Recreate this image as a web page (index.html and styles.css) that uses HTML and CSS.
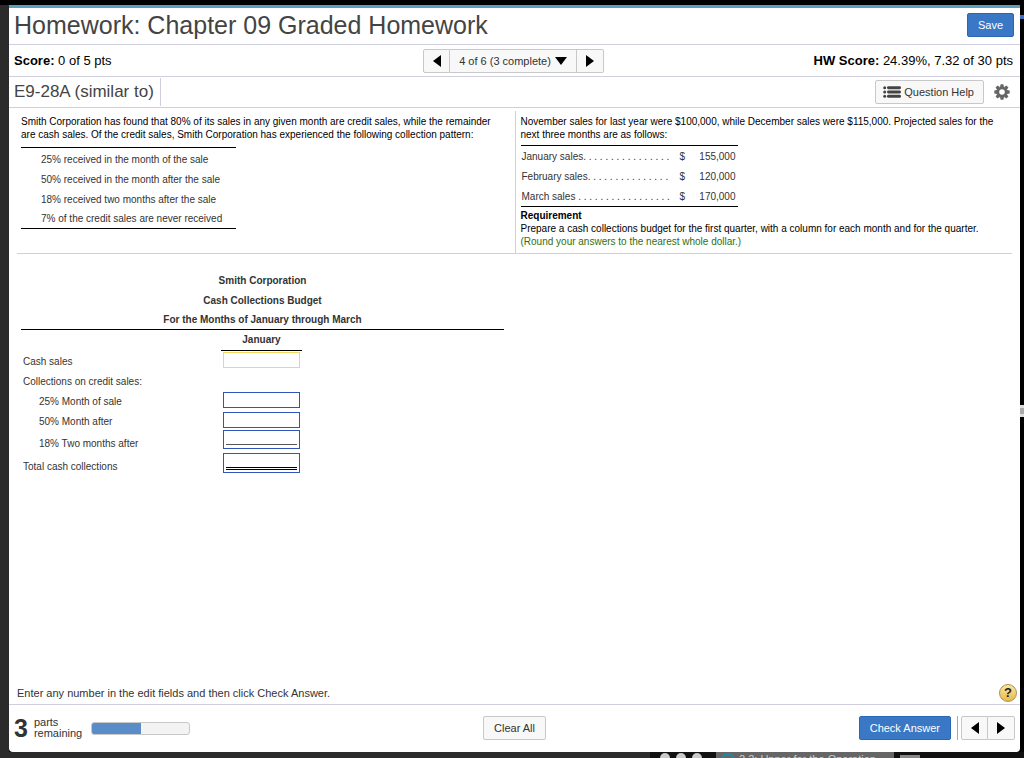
FILE: index.html
```
<!DOCTYPE html>
<html lang="en">
<head>
    <meta charset="UTF-8">
    <meta name="viewport" content="width=device-width, initial-scale=1.0">
    <title>Homework: Chapter 09 Graded Homework</title>
    <link rel="stylesheet" href="styles.css">
</head>
<body>
    <div class="window">
        <header class="titlebar">
            <h1>Homework: Chapter 09 Graded Homework</h1>
            <button class="btn btn-primary" type="button">Save</button>
        </header>

        <div class="scorebar">
            <div><b>Score:</b> 0 of 5 pts</div>
            <nav class="btn-group">
                <button class="btn btn-arrow" type="button" aria-label="Previous question">
                    <svg width="8" height="12" viewBox="0 0 8 12"><path d="M8 0v12L0 6z"/></svg>
                </button>
                <button class="btn btn-pick" type="button">4 of 6 (3 complete)
                    <svg width="12" height="8" viewBox="0 0 12 8"><path d="M0 0h12L6 8z"/></svg>
                </button>
                <button class="btn btn-arrow" type="button" aria-label="Next question">
                    <svg width="8" height="12" viewBox="0 0 8 12"><path d="M0 0v12l8-6z"/></svg>
                </button>
            </nav>
            <div class="hw-score"><b>HW Score:</b> 24.39%, 7.32 of 30 pts</div>
        </div>

        <div class="questionbar">
            <h2>E9-28A (similar to)</h2>
            <div class="tools">
                <button class="btn btn-help" type="button">
                    <svg width="18" height="12" viewBox="0 0 18 12">
                        <g fill="#444">
                            <circle cx="1.7" cy="1.7" r="1.5"/><circle cx="1.7" cy="6" r="1.5"/><circle cx="1.7" cy="10.3" r="1.5"/>
                            <rect x="4" y="0.2" width="14" height="3" rx="1.4"/><rect x="4" y="4.5" width="14" height="3" rx="1.4"/><rect x="4" y="8.8" width="14" height="3" rx="1.4"/>
                        </g>
                    </svg>
                    Question Help
                </button>
                <button class="gear" type="button" aria-label="Settings">
                    <svg width="16" height="16" viewBox="-8 -8 16 16">
                        <circle r="4.2" fill="none" stroke="#666" stroke-width="2.8"/>
                        <g fill="#666">
                            <path id="tooth" d="M-1.9-5L-1.4-7.7H1.4L1.9-5z"/>
                            <use href="#tooth" transform="rotate(45)"/>
                            <use href="#tooth" transform="rotate(90)"/>
                            <use href="#tooth" transform="rotate(135)"/>
                            <use href="#tooth" transform="rotate(180)"/>
                            <use href="#tooth" transform="rotate(225)"/>
                            <use href="#tooth" transform="rotate(270)"/>
                            <use href="#tooth" transform="rotate(315)"/>
                        </g>
                    </svg>
                </button>
            </div>
        </div>

        <main>
            <section class="problem">
                <div class="problem-left">
                    <p>Smith Corporation has found that 80% of its sales in any given month are credit sales, while the remainder<br>are cash sales. Of the credit sales, Smith Corporation has experienced the following collection pattern:</p>
                    <ul class="pattern">
                        <li>25% received in the month of the sale</li>
                        <li>50% received in the month after the sale</li>
                        <li>18% received two months after the sale</li>
                        <li>7% of the credit sales are never received</li>
                    </ul>
                </div>
                <div class="problem-right">
                    <p>November sales for last year were $100,000, while December sales were $115,000. Projected sales for the<br>next three months are as follows:</p>
                    <table class="sales">
                        <tr><td>January sales. . . . . . . . . . . . . . . .</td><td>$</td><td>155,000</td></tr>
                        <tr><td>February sales. . . . . . . . . . . . . . .</td><td>$</td><td>120,000</td></tr>
                        <tr><td>March sales . . . . . . . . . . . . . . . . .</td><td>$</td><td>170,000</td></tr>
                    </table>
                    <h3>Requirement</h3>
                    <p>Prepare a cash collections budget for the first quarter, with a column for each month and for the quarter.</p>
                    <p class="round">(Round your answers to the nearest whole dollar.)</p>
                </div>
            </section>

            <section class="answer">
                <div class="caption">
                    <div>Smith Corporation</div>
                    <div>Cash Collections Budget</div>
                    <div>For the Months of January through March</div>
                </div>
                <table class="budget">
                    <thead>
                        <tr><th></th><th class="month">January</th></tr>
                    </thead>
                    <tbody>
                        <tr><td><label for="cash">Cash sales</label></td><td><input class="active" id="cash" type="text"></td></tr>
                        <tr><td>Collections on credit sales:</td><td></td></tr>
                        <tr><td class="indent"><label for="m0">25% Month of sale</label></td><td><input id="m0" type="text"></td></tr>
                        <tr><td class="indent"><label for="m1">50% Month after</label></td><td><input id="m1" type="text"></td></tr>
                        <tr class="tall"><td class="indent"><label for="m2">18% Two months after</label></td><td><div class="field subtotal"><input id="m2" type="text"></div></td></tr>
                        <tr class="tall"><td><label for="total">Total cash collections</label></td><td><div class="field total"><input id="total" type="text"></div></td></tr>
                    </tbody>
                </table>
            </section>
        </main>

        <div class="hint">
            <span>Enter any number in the edit fields and then click Check Answer.</span>
            <button class="help" type="button" aria-label="Help">?</button>
        </div>

        <footer>
            <div class="parts">
                <span class="count">3</span>
                <span class="parts-label">parts<br>remaining</span>
                <div class="progress"><div class="bar" style="width: 50%"></div></div>
            </div>
            <button class="btn btn-clear" type="button">Clear All</button>
            <div class="actions">
                <button class="btn btn-primary" type="button">Check Answer</button>
                <div class="btn-group">
                    <button class="btn btn-arrow" type="button" aria-label="Previous part">
                        <svg width="8" height="12" viewBox="0 0 8 12"><path d="M8 0v12L0 6z"/></svg>
                    </button>
                    <button class="btn btn-arrow" type="button" aria-label="Next part">
                        <svg width="8" height="12" viewBox="0 0 8 12"><path d="M0 0v12l8-6z"/></svg>
                    </button>
                </div>
            </div>
        </footer>
    </div>

    <!-- top edge of the browser window behind -->
    <div class="behind">
        <div class="browser">
            <i class="dot"></i><i class="dot"></i><i class="dot"></i>
            <div class="tab"><i class="favicon"></i>2.2: Upper for the Operation</div>
            <i class="newtab"></i>
        </div>
    </div>
    <div class="edge-blue"></div>
    <div class="edge-scroll"></div>
</body>
</html>
```
FILE: styles.css
```
* {
    box-sizing: border-box;
}
body {
    display: flex;
    flex-direction: column;
    min-height: 100vh;
    margin: 0;
    padding: 5px 4px 0 9px;
    background: linear-gradient(to right, #2b2b2b 9px, #000 9px);
    font-family: "Liberation Sans", Arial, sans-serif;
    font-size: 11px;
    color: #333;
    position: relative;
}
body::before {
    content: "";
    position: absolute;
    top: 0;
    left: 0;
    right: 0;
    height: 5px;
    background: #000;
}
h1, h2, h3, p, ul {
    margin: 0;
    padding: 0;
    font-weight: normal;
}
button, input {
    font-family: inherit;
}
.window {
    flex: 1;
    display: flex;
    flex-direction: column;
    background: #fff;
    border-top: 3px solid #5a9fc0;
    border-radius: 0 0 4px 4px;
}

/* buttons */
.btn {
    height: 24px;
    padding: 0 10px;
    border: 1px solid #c8c8c8;
    border-radius: 2px;
    background: #f8f8f8;
    color: #333;
    font-size: 11px;
    white-space: nowrap;
    cursor: pointer;
}
.btn-primary {
    background: #3a78c5;
    border-color: #2b68b4;
    color: #fff;
}
.btn-group {
    display: flex;
}
.btn-group .btn {
    border-radius: 0;
}
.btn-group .btn + .btn {
    border-left: 0;
}
.btn-group .btn:first-child {
    border-radius: 2px 0 0 2px;
}
.btn-group .btn:last-child {
    border-radius: 0 2px 2px 0;
}
.btn-arrow {
    display: flex;
    align-items: center;
    justify-content: center;
    width: 27px;
    padding: 0;
}
.btn-pick {
    display: flex;
    align-items: center;
    gap: 4px;
    padding: 0 9px;
}

/* header rows */
.titlebar {
    display: flex;
    align-items: center;
    justify-content: space-between;
    height: 37px;
    padding: 0 6px 2px 5px;
    border-bottom: 1px solid #cfcfe0;
}
.titlebar h1 {
    font-size: 25px;
    color: #444;
}
.scorebar {
    display: grid;
    grid-template-columns: 1fr auto 1fr;
    align-items: center;
    height: 32px;
    padding: 0 7px 0 5px;
    border-bottom: 1px solid #cfcfe0;
    font-size: 13px;
    color: #000;
}
.hw-score {
    text-align: right;
}
.questionbar {
    display: flex;
    justify-content: space-between;
    height: 31px;
    padding: 1px 10px 1px 5px;
    border-bottom: 1px solid #cfcfe0;
}
.questionbar h2 {
    padding-right: 6px;
    border-right: 1px solid #cfcfe0;
    font-size: 17px;
    line-height: 28px;
    color: #444;
}
.tools {
    display: flex;
    align-items: center;
    gap: 10px;
}
.btn-help {
    display: flex;
    align-items: center;
    gap: 3px;
    padding: 0 9px 0 7px;
}
.gear {
    display: flex;
    padding: 0;
    border: 0;
    background: none;
}

/* problem text */
main {
    flex: 1;
    padding: 3px 8px 0;
    font-size: 10px;
}
.problem {
    display: grid;
    grid-template-columns: 1fr 1fr;
    border-bottom: 1px solid #cfcfe0;
    line-height: 13px;
    color: #000;
}
.problem-left {
    padding: 4px 0 0 4px;
}
.problem-right {
    padding: 4px 0 5px 5px;
    border-left: 1px solid #cfcfe0;
}
.problem p {
    white-space: nowrap;
}
.pattern {
    width: 215px;
    margin-top: 6px;
    padding: 2px 0 0 20px;
    border-top: 1px solid #000;
    border-bottom: 1px solid #000;
    list-style: none;
    line-height: 20px;
    white-space: nowrap;
    color: #333;
}
.pattern li:last-child {
    line-height: 18px;
}
.sales {
    width: 217px;
    margin-top: 4px;
    border-collapse: collapse;
    border-top: 1px solid #000;
    border-bottom: 1px solid #000;
    line-height: 18px;
    color: #333;
}
.sales td {
    padding: 2px 2px 0 1px;
    white-space: nowrap;
}
.sales td:first-child {
    width: 158px;
}
.sales td:last-child {
    text-align: right;
}
.problem h3 {
    margin-top: 2px;
    font-size: 10px;
    font-weight: bold;
}
.problem .round {
    color: #2f6f10;
}

/* answer table */
.answer {
    width: 487px;
    padding: 17px 0 0 4px;
}
.caption {
    border-bottom: 1px solid #000;
    font-weight: bold;
    line-height: 20px;
    text-align: center;
}
.caption div:last-child {
    line-height: 18px;
}
.budget {
    border-collapse: collapse;
}
.budget th, .budget td {
    height: 20px;
    padding: 0 2px;
    text-align: left;
}
.budget th:first-child, .budget td:first-child {
    width: 200px;
}
.budget td:first-child {
    padding-top: 3px;
}
.budget .month {
    width: 80px;
    border-bottom: 1px solid #000;
    text-align: center;
}
.budget td.indent {
    padding-left: 18px;
}
.budget .tall td {
    height: 23px;
}
.budget .tall td:last-child {
    vertical-align: top;
}
.budget input {
    display: block;
    width: 77px;
    height: 16px;
    padding: 0 3px;
    border: 1px solid #2f55bd;
    background: #fff;
    font-size: 10px;
}
.budget input.active {
    border-color: #f5d95c;
}
.field {
    width: 77px;
    padding: 0 2px 3px;
    border: 1px solid #2f55bd;
}
.budget .field input {
    width: 100%;
    height: 14px;
    border: 0;
    border-bottom: 1px solid #555;
}
.total {
    padding-bottom: 2px;
}
.budget .total input {
    height: 16px;
    border-bottom: 3px double #000;
}

/* bottom rows */
.hint {
    display: flex;
    align-items: center;
    justify-content: space-between;
    height: 24px;
    padding: 0 3px 0 8px;
    border-bottom: 1px solid #cfcfe0;
}
.help {
    width: 18px;
    height: 18px;
    padding: 0;
    border: 1px solid #a8925a;
    border-radius: 50%;
    background: linear-gradient(#fbe7a0, #e8b84a);
    color: #222;
    font-size: 13px;
    font-weight: bold;
    line-height: 16px;
}
footer {
    display: grid;
    grid-template-columns: 1fr auto 1fr;
    align-items: center;
    height: 47px;
    padding: 0 5px 1px;
}
.parts {
    display: flex;
    align-items: center;
    line-height: 11px;
}
.count {
    margin-right: 6px;
    font-size: 25px;
    font-weight: bold;
}
.progress {
    width: 99px;
    height: 13px;
    margin-left: 9px;
    overflow: hidden;
    border: 1px solid #c8c8c8;
    border-radius: 3px;
    background: #f3f3f3;
}
.bar {
    height: 100%;
    background: #5a8cc8;
}
.actions {
    display: flex;
    justify-content: flex-end;
    gap: 6px;
}
.actions .btn-group {
    padding-left: 3px;
    border-left: 1px solid #aaa;
}

/* desktop around the window */
.behind {
    height: 6px;
    margin-left: -9px;
    margin-right: -4px;
    overflow: hidden;
    background: #2b2b2b;
}
.browser {
    display: flex;
    gap: 6px;
    width: 374px;
    margin-left: auto;
    padding-left: 10px;
    background: #111;
}
.dot {
    width: 10px;
    height: 10px;
    margin-top: 1px;
    border-radius: 50%;
    background: #ccc;
}
.tab {
    display: flex;
    gap: 5px;
    width: 178px;
    margin-left: 8px;
    padding-left: 6px;
    background: #666;
    color: #ccc;
    line-height: 14px;
    white-space: nowrap;
}
.favicon {
    width: 12px;
    height: 12px;
    margin-top: 1px;
    border: 2px solid #1a8aa8;
    border-radius: 50%;
}
.newtab {
    width: 20px;
    height: 10px;
    margin-top: 3px;
    background: #888;
}
.edge-blue {
    position: absolute;
    top: 15px;
    right: 0;
    width: 4px;
    height: 4px;
    background: #3f6fc4;
}
.edge-scroll {
    position: absolute;
    top: 405px;
    right: 0;
    width: 4px;
    height: 12px;
    border: solid #ddd;
    border-width: 3px 0;
    background: #aaa;
}
```
